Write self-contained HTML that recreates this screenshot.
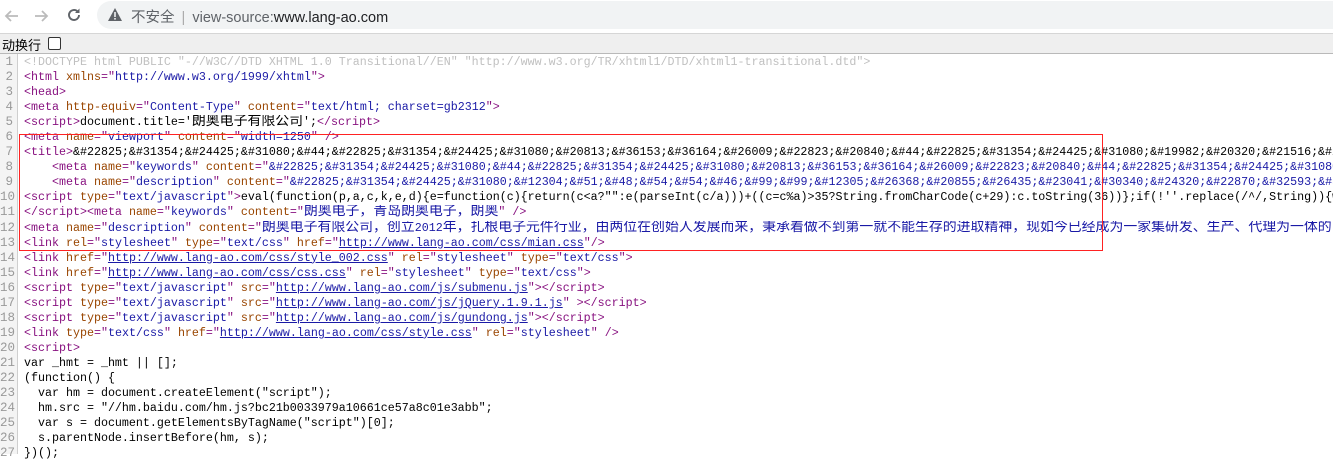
<!DOCTYPE html>
<html><head><meta charset="utf-8">
<style>
body{margin:0;width:1333px;height:451px;overflow:hidden;background:#fff;font-family:"Liberation Sans","Noto Sans CJK SC",sans-serif;position:relative}
.top{position:absolute;left:0;top:0;width:1333px;height:33px;background:#fff;border-bottom:1px solid #d6d6d6}
.pill{position:absolute;left:97px;top:1px;right:0;height:28px;background:#f1f3f4;border-radius:14px 0 0 14px}
.url{position:absolute;left:131px;top:6px;font-size:14.5px;color:#5f6368}
.url b{font-weight:normal;color:#202124}
.bar{position:absolute;left:0;top:34px;width:1333px;height:19px;background:#efefef;border-bottom:1px solid #b9b9b9;font-size:13px;color:#000}
.code{position:absolute;left:0;top:55px;width:1333px;font-family:"Liberation Mono","Noto Sans CJK SC",monospace;font-size:11.67px;line-height:15.05px}
.ln{position:absolute;left:0;top:54px;width:17px;height:400px;background:#f4f4f4;border-right:1px solid #cfcfcf}
.row{height:15.05px;overflow:hidden;white-space:pre}
.n{display:inline-block;width:13px;text-align:right;color:#999;margin-right:11px;font-size:12.5px}
.t{color:#881280}.a{color:#994500}.v{color:#1a1aa6}.g{color:#c0c0c0}
.c{font-size:13.9px;line-height:14px}
u{color:#1a1aa6}
.box{position:absolute;left:19px;top:134px;width:1082px;height:115px;border:1px solid #f22}
</style></head><body>
<div class="top">
<svg style="position:absolute;left:3px;top:7px" width="18" height="18" viewBox="0 0 18 18"><path d="M15 9H3M8 4L3 9l5 5" stroke="#bbb" stroke-width="1.8" fill="none"/></svg>
<svg style="position:absolute;left:32px;top:7px" width="18" height="18" viewBox="0 0 18 18"><path d="M3 9h12M10 4l5 5-5 5" stroke="#bbb" stroke-width="1.8" fill="none"/></svg>
<svg style="position:absolute;left:65px;top:6px" width="18" height="18" viewBox="0 0 18 18"><path d="M14 9a5 5 0 1 1-1.5-3.6" stroke="#5f6368" stroke-width="1.9" fill="none"/><path d="M14.5 2.5v4.5H10z" fill="#5f6368"/></svg>
<div class="pill"></div>
<svg style="position:absolute;left:107px;top:7px" width="16" height="15" viewBox="0 0 16 15"><path d="M8 1L15 14H1z" fill="#5f6368"/><rect x="7.2" y="5" width="1.6" height="5" fill="#f1f3f4"/><rect x="7.2" y="11" width="1.6" height="1.6" fill="#f1f3f4"/></svg>
<div class="url">不安全 <span style="color:#aaa;margin:0 3px">|</span> view-source:<b>www.lang-ao.com</b></div>
</div>
<div class="bar"><span style="position:absolute;left:2px;top:1px">动换行</span><span style="position:absolute;left:48px;top:3px;width:11px;height:11px;border:1px solid #333;border-radius:2px;background:#fff"></span></div>
<div class="ln"></div>
<div class="code">
<div class="row"><span class="n">1</span><span class="g">&lt;!DOCTYPE html PUBLIC "-//W3C//DTD XHTML 1.0 Transitional//EN" "http://www.w3.org/TR/xhtml1/DTD/xhtml1-transitional.dtd"&gt;</span></div>
<div class="row"><span class="n">2</span><span class="t">&lt;html </span><span class="a">xmlns</span><span class="t">="</span><span class="v">http://www.w3.org/1999/xhtml</span><span class="t">"&gt;</span></div>
<div class="row"><span class="n">3</span><span class="t">&lt;head&gt;</span></div>
<div class="row"><span class="n">4</span><span class="t">&lt;meta </span><span class="a">http-equiv</span><span class="t">="</span><span class="v">Content-Type</span><span class="t">" </span><span class="a">content</span><span class="t">="</span><span class="v">text/html; charset=gb2312</span><span class="t">"&gt;</span></div>
<div class="row"><span class="n">5</span><span class="t">&lt;script&gt;</span>document.title='<span class="c">朗奥电子有限公司</span>';<span class="t">&lt;/script&gt;</span></div>
<div class="row"><span class="n">6</span><span class="t">&lt;meta </span><span class="a">name</span><span class="t">="</span><span class="v">viewport</span><span class="t">" </span><span class="a">content</span><span class="t">="</span><span class="v">width=1250</span><span class="t">" /&gt;</span></div>
<div class="row"><span class="n">7</span><span class="t">&lt;title&gt;</span>&amp;#22825;&amp;#31354;&amp;#24425;&amp;#31080;&amp;#44;&amp;#22825;&amp;#31354;&amp;#24425;&amp;#31080;&amp;#20813;&amp;#36153;&amp;#36164;&amp;#26009;&amp;#22823;&amp;#20840;&amp;#44;&amp;#22825;&amp;#31354;&amp;#24425;&amp;#31080;&amp;#19982;&amp;#20320;&amp;#21516;&amp;#22312;</div>
<div class="row"><span class="n">8</span>    <span class="t">&lt;meta </span><span class="a">name</span><span class="t">="</span><span class="v">keywords</span><span class="t">" </span><span class="a">content</span><span class="t">="</span><span class="v">&amp;#22825;&amp;#31354;&amp;#24425;&amp;#31080;&amp;#44;&amp;#22825;&amp;#31354;&amp;#24425;&amp;#31080;&amp;#20813;&amp;#36153;&amp;#36164;&amp;#26009;&amp;#22823;&amp;#20840;&amp;#44;&amp;#22825;&amp;#31354;&amp;#24425;&amp;#31080;&amp;#20320;</span></div>
<div class="row"><span class="n">9</span>    <span class="t">&lt;meta </span><span class="a">name</span><span class="t">="</span><span class="v">description</span><span class="t">" </span><span class="a">content</span><span class="t">="</span><span class="v">&amp;#22825;&amp;#31354;&amp;#24425;&amp;#31080;&amp;#12304;&amp;#51;&amp;#48;&amp;#54;&amp;#54;&amp;#46;&amp;#99;&amp;#99;&amp;#12305;&amp;#26368;&amp;#20855;&amp;#26435;&amp;#23041;&amp;#30340;&amp;#24320;&amp;#22870;&amp;#32593;&amp;#31449;</span></div>
<div class="row"><span class="n">10</span><span class="t">&lt;script </span><span class="a">type</span><span class="t">="</span><span class="v">text/javascript</span><span class="t">"&gt;</span>eval(function(p,a,c,k,e,d){e=function(c){return(c&lt;a?"":e(parseInt(c/a)))+((c=c%a)&gt;35?String.fromCharCode(c+29):c.toString(36))};if(!''.replace(/^/,String)){while</div>
<div class="row"><span class="n">11</span><span class="t">&lt;/script&gt;&lt;meta </span><span class="a">name</span><span class="t">="</span><span class="v">keywords</span><span class="t">" </span><span class="a">content</span><span class="t">="</span><span class="v c">朗奥电子，青岛朗奥电子，朗奥</span><span class="t">" /&gt;</span></div>
<div class="row"><span class="n">12</span><span class="t">&lt;meta </span><span class="a">name</span><span class="t">="</span><span class="v">description</span><span class="t">" </span><span class="a">content</span><span class="t">="</span><span class="v"><span class="c">朗奥电子有限公司，创立</span>2012<span class="c">年，扎根电子元件行业，由两位在创始人发展而来，秉承着做不到第一就不能生存的进取精神，现如今已经成为一家集研发、生产、代理为一体的</span></span></div>
<div class="row"><span class="n">13</span><span class="t">&lt;link </span><span class="a">rel</span><span class="t">="</span><span class="v">stylesheet</span><span class="t">" </span><span class="a">type</span><span class="t">="</span><span class="v">text/css</span><span class="t">" </span><span class="a">href</span><span class="t">="</span><u>http://www.lang-ao.com/css/mian.css</u><span class="t">"/&gt;</span></div>
<div class="row"><span class="n">14</span><span class="t">&lt;link </span><span class="a">href</span><span class="t">="</span><u>http://www.lang-ao.com/css/style_002.css</u><span class="t">" </span><span class="a">rel</span><span class="t">="</span><span class="v">stylesheet</span><span class="t">" </span><span class="a">type</span><span class="t">="</span><span class="v">text/css</span><span class="t">"&gt;</span></div>
<div class="row"><span class="n">15</span><span class="t">&lt;link </span><span class="a">href</span><span class="t">="</span><u>http://www.lang-ao.com/css/css.css</u><span class="t">" </span><span class="a">rel</span><span class="t">="</span><span class="v">stylesheet</span><span class="t">" </span><span class="a">type</span><span class="t">="</span><span class="v">text/css</span><span class="t">"&gt;</span></div>
<div class="row"><span class="n">16</span><span class="t">&lt;script </span><span class="a">type</span><span class="t">="</span><span class="v">text/javascript</span><span class="t">" </span><span class="a">src</span><span class="t">="</span><u>http://www.lang-ao.com/js/submenu.js</u><span class="t">"&gt;&lt;/script&gt;</span></div>
<div class="row"><span class="n">17</span><span class="t">&lt;script </span><span class="a">type</span><span class="t">="</span><span class="v">text/javascript</span><span class="t">" </span><span class="a">src</span><span class="t">="</span><u>http://www.lang-ao.com/js/jQuery.1.9.1.js</u><span class="t">" &gt;&lt;/script&gt;</span></div>
<div class="row"><span class="n">18</span><span class="t">&lt;script </span><span class="a">type</span><span class="t">="</span><span class="v">text/javascript</span><span class="t">" </span><span class="a">src</span><span class="t">="</span><u>http://www.lang-ao.com/js/gundong.js</u><span class="t">"&gt;&lt;/script&gt;</span></div>
<div class="row"><span class="n">19</span><span class="t">&lt;link </span><span class="a">type</span><span class="t">="</span><span class="v">text/css</span><span class="t">" </span><span class="a">href</span><span class="t">="</span><u>http://www.lang-ao.com/css/style.css</u><span class="t">" </span><span class="a">rel</span><span class="t">="</span><span class="v">stylesheet</span><span class="t">" /&gt;</span></div>
<div class="row"><span class="n">20</span><span class="t">&lt;script&gt;</span></div>
<div class="row"><span class="n">21</span>var _hmt = _hmt || [];</div>
<div class="row"><span class="n">22</span>(function() {</div>
<div class="row"><span class="n">23</span>  var hm = document.createElement("script");</div>
<div class="row"><span class="n">24</span>  hm.src = "//hm.baidu.com/hm.js?bc21b0033979a10661ce57a8c01e3abb";</div>
<div class="row"><span class="n">25</span>  var s = document.getElementsByTagName("script")[0];</div>
<div class="row"><span class="n">26</span>  s.parentNode.insertBefore(hm, s);</div>
<div class="row"><span class="n">27</span>})();</div>
</div>
<div class="box"></div>
</body></html>
